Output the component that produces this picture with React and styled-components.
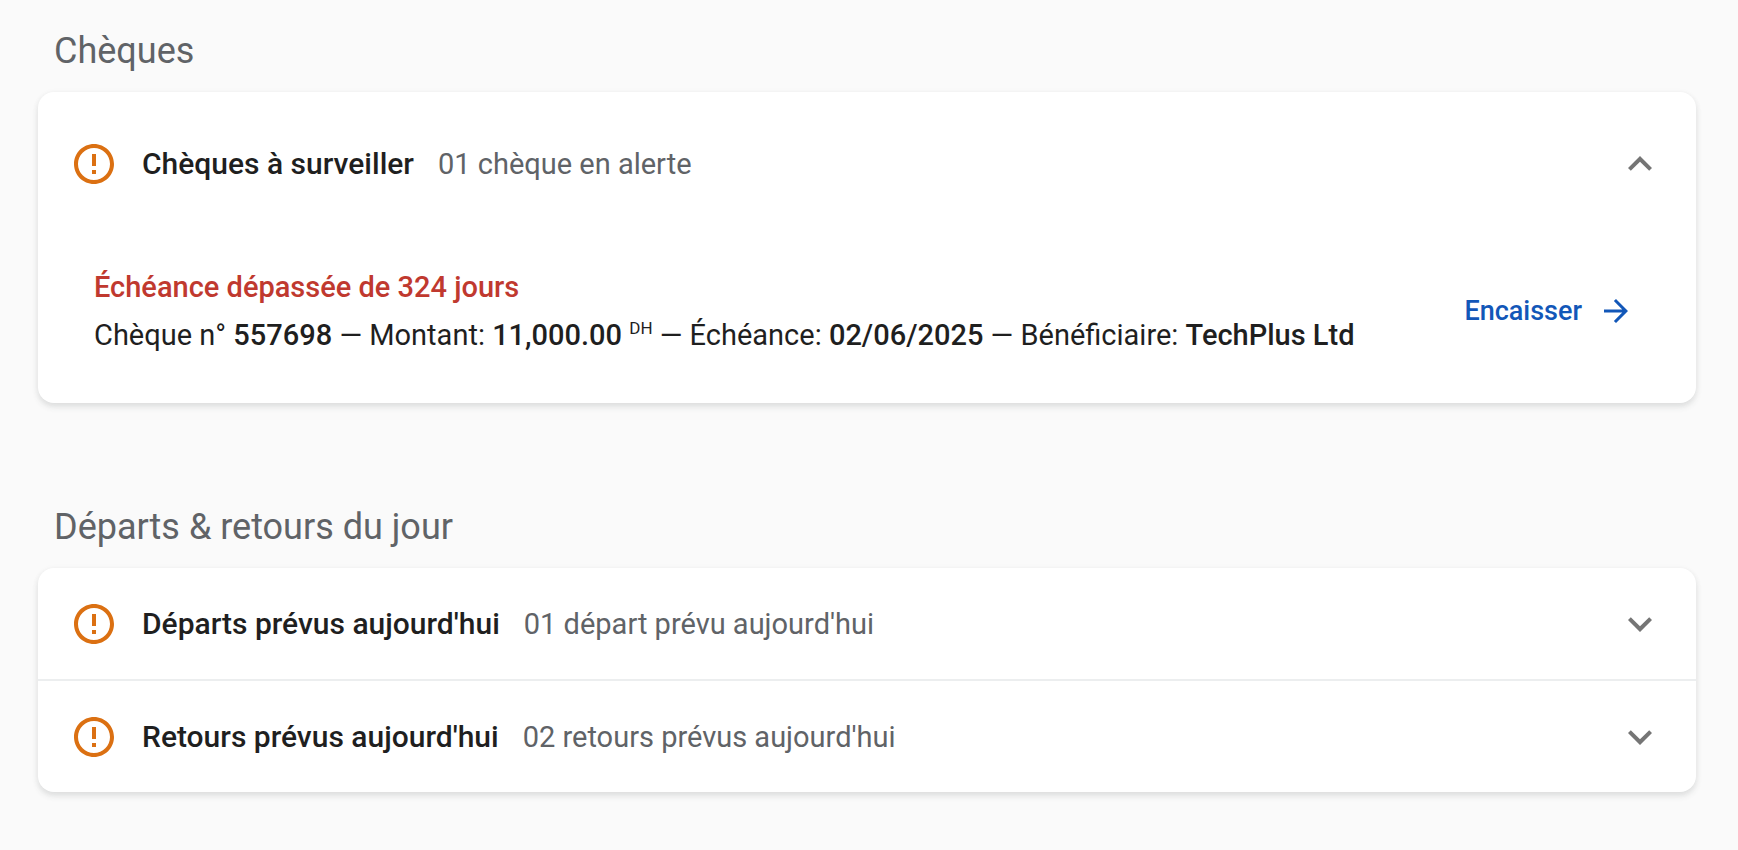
import React, { useState } from "react";
import styled, { createGlobalStyle } from "styled-components";

const GlobalStyle = createGlobalStyle`
  * {
    box-sizing: border-box;
  }
  body {
    margin: 0;
    background-color: #fafafa;
    color: #1f1f1f;
    font-family: "Google Sans", Roboto, "Liberation Sans", sans-serif;
  }
`;

const Page = styled.main`
  padding: 25px 42px 56px 38px;
`;

const Section = styled.section`
  & + & {
    margin-top: 98px;
  }
`;

const SectionTitle = styled.h2`
  margin: 0 0 15px;
  padding: 0 16px;
  font-size: 36px;
  font-weight: 400;
  line-height: 52px;
  color: #606367;
`;

const Card = styled.div`
  border-radius: 16px;
  background-color: #fff;
  box-shadow: 0 4px 6px rgba(60, 64, 67, 0.12), 0 1px 6px rgba(60, 64, 67, 0.05);
`;

const Panel = styled.div`
  & + & {
    border-top: 2px solid #eceeef;
  }
`;

const PanelHeader = styled.button`
  display: flex;
  align-items: center;
  width: 100%;
  height: ${(props) => (props.$open ? "143px" : "111px")};
  padding: 0 32px;
  border: 0;
  background: none;
  color: inherit;
  font-family: inherit;
  font-size: 29px;
  line-height: 40px;
  text-align: left;
  cursor: pointer;
`;

const PanelTitle = styled.span`
  margin: 0 24px;
  font-size: 30px;
  font-weight: 500;
`;

const PanelInfo = styled.span`
  flex: 1;
  color: #606367;
`;

const Icon = styled.svg`
  flex: none;
  width: ${(props) => props.$size}px;
  height: ${(props) => props.$size}px;
  fill: ${(props) => props.$color};
`;

const PanelBody = styled.div`
  display: flex;
  align-items: center;
  justify-content: space-between;
  padding: 28px 62px 44px 56px;
`;

const Details = styled.div`
  font-size: 29px;
  line-height: 48px;
  p {
    margin: 0;
  }
  strong {
    font-weight: 500;
  }
  sup {
    font-size: 17px;
    line-height: 0;
  }
`;

const Overdue = styled.p`
  color: #c0392f;
  font-weight: 500;
`;

const Action = styled.a`
  display: flex;
  align-items: center;
  gap: 16px;
  color: #1257b8;
  font-size: 27px;
  font-weight: 500;
  line-height: 40px;
  text-decoration: none;
`;

const WarningIcon = () => (
  <Icon viewBox="0 0 24 24" $size={48} $color="#db7012" aria-hidden="true">
    <path d="M11 15h2v2h-2zm0-8h2v6h-2zm.99-5C6.47 2 2 6.48 2 12s4.47 10 9.99 10C17.52 22 22 17.52 22 12S17.52 2 11.99 2zM12 20c-4.42 0-8-3.58-8-8s3.58-8 8-8 8 3.58 8 8-3.58 8-8 8z" />
  </Icon>
);

const ToggleIcon = ({ open }) => (
  <Icon viewBox="0 0 24 24" $size={48} $color="#757575" aria-hidden="true">
    <path
      d={
        open
          ? "M12 8l-6 6 1.41 1.41L12 10.83l4.59 4.58L18 14z"
          : "M16.59 8.59L12 13.17 7.41 8.59 6 10l6 6 6-6z"
      }
    />
  </Icon>
);

const AlertPanel = ({ title, info, defaultOpen = false, children }) => {
  const [open, setOpen] = useState(defaultOpen);
  return (
    <Panel>
      <PanelHeader
        type="button"
        $open={open}
        aria-expanded={open}
        onClick={() => setOpen(!open)}
      >
        <WarningIcon />
        <PanelTitle>{title}</PanelTitle>
        <PanelInfo>{info}</PanelInfo>
        <ToggleIcon open={open} />
      </PanelHeader>
      {open && children}
    </Panel>
  );
};

const App = () => {
  return (
    <>
      <GlobalStyle />
      <Page>
        <Section>
          <SectionTitle>Chèques</SectionTitle>
          <Card>
            <AlertPanel
              title="Chèques à surveiller"
              info="01 chèque en alerte"
              defaultOpen
            >
              <PanelBody>
                <Details>
                  <Overdue>Échéance dépassée de 324 jours</Overdue>
                  <p>
                    Chèque n° <strong>557698</strong> — Montant:{" "}
                    <strong>11,000.00</strong> <sup>DH</sup> — Échéance:{" "}
                    <strong>02/06/2025</strong> — Bénéficiaire:{" "}
                    <strong>TechPlus Ltd</strong>
                  </p>
                </Details>
                <Action href="#encaisser">
                  Encaisser
                  <Icon
                    viewBox="0 0 24 24"
                    $size={36}
                    $color="#1257b8"
                    aria-hidden="true"
                  >
                    <path d="M16.175 13H4v-2h12.175l-5.6-5.6L12 4l8 8-8 8-1.425-1.4z" />
                  </Icon>
                </Action>
              </PanelBody>
            </AlertPanel>
          </Card>
        </Section>

        <Section>
          <SectionTitle>Départs &amp; retours du jour</SectionTitle>
          <Card>
            <AlertPanel
              title="Départs prévus aujourd'hui"
              info="01 départ prévu aujourd'hui"
            />
            <AlertPanel
              title="Retours prévus aujourd'hui"
              info="02 retours prévus aujourd'hui"
            />
          </Card>
        </Section>
      </Page>
    </>
  );
};

export default App;
